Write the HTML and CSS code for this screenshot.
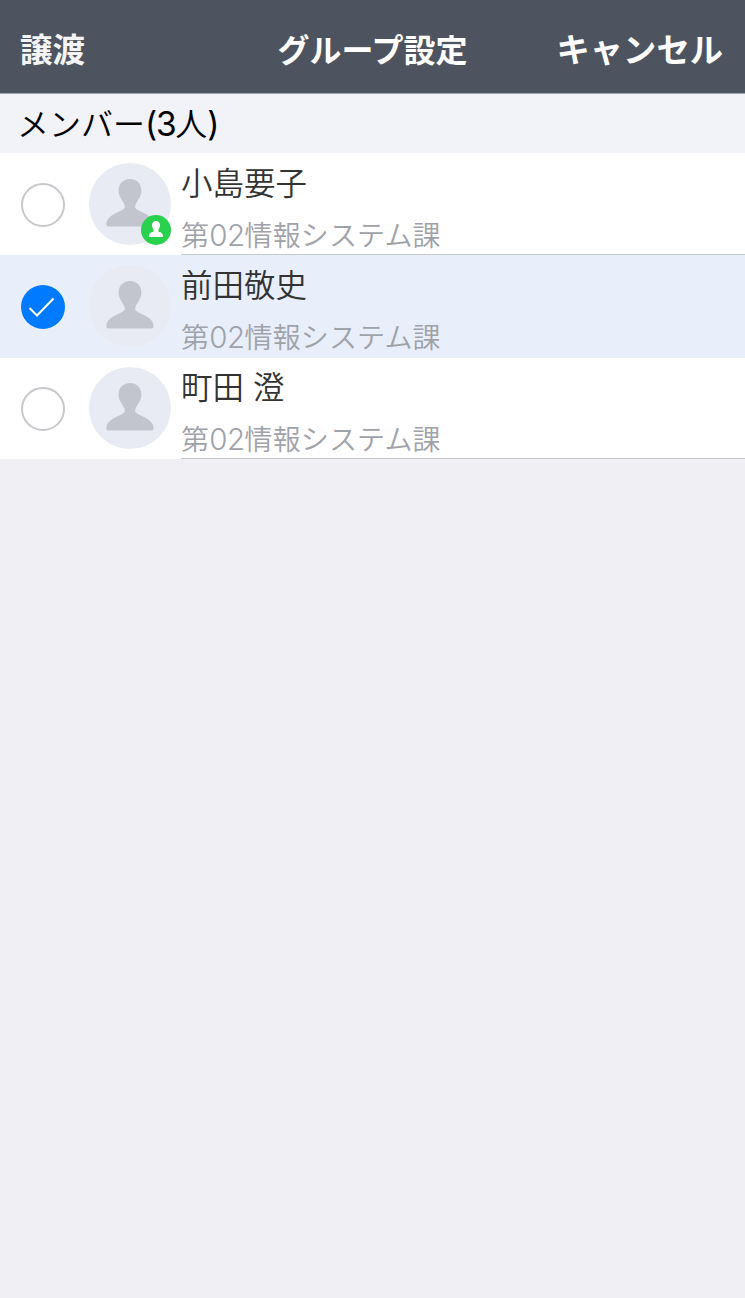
FILE: index.html
```
<!DOCTYPE html>
<html lang="ja">

<head>
  <meta charset="UTF-8" />
  <meta name="viewport" content="width=device-width, initial-scale=1.0" />
  <title>グループ設定</title>
  <link rel="stylesheet" href="styles.css">
</head>

<body>
  <!-- Shared icon shapes -->
  <svg class="symbols" aria-hidden="true">
    <symbol id="person" viewBox="0 0 48 48">
      <path d="M24 0C17 0 12.600 5 12.600 11.800C12.600 17.500 16 20.500 18.300 25.200C19.600 28 18.800 29.500 15.800 31.200C9.500 34.700 0.300 37 0.300 45.500Q0.300 47.600 2.600 47.600H45.400Q47.700 47.600 47.700 45.500C47.700 37 38.500 34.700 32.200 31.200C29.200 29.500 28.400 28 29.700 25.200C32 20.500 35.400 17.500 35.400 11.800C35.400 5 31 0 24 0z" />
    </symbol>
  </svg>

  <header class="navbar">
    <button class="nav-button">譲渡</button>
    <h1>グループ設定</h1>
    <button class="nav-button cancel">キャンセル</button>
  </header>

  <h2 class="section-title">メンバー<span class="latin">(3</span>人<span class="latin">)</span></h2>

  <ul class="member-list">
    <li class="member">
      <span class="radio"></span>
      <div class="avatar">
        <svg class="avatar-icon"><use href="#person" /></svg>
        <span class="badge">
          <svg class="badge-icon" viewBox="0 0 14 16">
            <path d="M7 0C4.500 0 3 1.700 3 4.200C3 6.200 3.700 7.400 4.600 8.400V10.200C3.500 11.300 0 11.600 0 14.800Q0 16 1 16H13Q14 16 14 14.800C14 11.600 10.500 11.300 9.400 10.200V8.400C10.300 7.400 11 6.200 11 4.200C11 1.700 9.500 0 7 0z" />
          </svg>
        </span>
      </div>
      <div class="member-info">
        <p class="name">小島要子</p>
        <p class="dept">第<span class="latin">02</span>情報システム課</p>
      </div>
    </li>
    <li class="member selected">
      <span class="radio">
        <svg class="check" viewBox="0 0 44 44"><path d="M8.500 23L16 30.500L32.500 13.500" /></svg>
      </span>
      <div class="avatar">
        <svg class="avatar-icon"><use href="#person" /></svg>
      </div>
      <div class="member-info">
        <p class="name">前田敬史</p>
        <p class="dept">第<span class="latin">02</span>情報システム課</p>
      </div>
    </li>
    <li class="member">
      <span class="radio"></span>
      <div class="avatar">
        <svg class="avatar-icon"><use href="#person" /></svg>
      </div>
      <div class="member-info">
        <p class="name">町田 澄</p>
        <p class="dept">第<span class="latin">02</span>情報システム課</p>
      </div>
    </li>
  </ul>
</body>

</html>
```
FILE: styles.css
```
* {
  box-sizing: border-box;
}

body {
  margin: 0;
  min-height: 100vh;
  background-color: #efeff4;
  color: #333333;
  font-family: "Noto Sans CJK JP", sans-serif;
}

h1,
h2,
p,
ul {
  margin: 0;
  padding: 0;
}

.symbols {
  display: none;
}

.latin {
  font-family: Inter, sans-serif;
  line-height: 1;
}

/* Navigation bar */
.navbar {
  display: grid;
  grid-template-columns: 1fr auto 1fr;
  align-items: center;
  height: 94px;
  padding: 2px 22px 0 20px;
  background-color: #4e545f;
  border-bottom: 1px solid #a1a5ad;
  color: #ffffff;
}

.navbar h1 {
  padding-left: 2px;
  font-size: 32px;
  font-weight: 700;
  line-height: 48px;
}

.nav-button {
  justify-self: start;
  padding: 0;
  border: none;
  background: none;
  color: #f4f4f6;
  font: inherit;
  font-size: 32.5px;
  font-weight: 700;
  line-height: 48px;
  cursor: pointer;
}

.nav-button.cancel {
  justify-self: end;
  color: #ffffff;
  font-size: 33.3px;
}

/* Section heading */
.section-title {
  height: 59px;
  padding-left: 17px;
  background-color: #f2f3f8;
  color: #000000;
  font-size: 32px;
  font-weight: 350;
  line-height: 57px;
}

.section-title .latin {
  font-size: 33.5px;
  font-weight: 400;
  letter-spacing: -1.3px;
}

/* Member list */
.member-list {
  list-style: none;
}

.member {
  display: flex;
  height: 102px;
  padding-left: 21px;
  background-color: #ffffff;
}

.radio {
  flex: none;
  width: 44px;
  height: 44px;
  margin: 30px 24px 0 0;
  border: 2px solid #c7c7cc;
  border-radius: 50%;
}

.avatar {
  position: relative;
  flex: none;
  width: 82px;
  height: 82px;
  margin: 10px 10px 0 0;
  border-radius: 50%;
  background-color: #e8ebf3;
}

.avatar-icon {
  display: block;
  width: 48px;
  height: 48px;
  margin: 16px auto 0;
  fill: #c2c5cd;
}

.badge {
  position: absolute;
  right: 0;
  bottom: 0;
  width: 30px;
  height: 30px;
  border-radius: 50%;
  background-color: #2ad14e;
}

.badge-icon {
  display: block;
  width: 14px;
  height: 16px;
  margin: 6px auto 0;
  fill: #ffffff;
}

.member-info {
  flex: 1;
  border-bottom: 1px solid #c8c7cc;
}

.name {
  height: 60px;
  font-size: 31.5px;
  font-weight: 350;
  line-height: 57px;
  word-spacing: 2px;
}

.dept {
  color: #9fa2a9;
  font-size: 28px;
  font-weight: 350;
  letter-spacing: 0.15px;
  line-height: 43px;
}

.dept .latin {
  font-size: 29.5px;
  font-weight: 350;
  letter-spacing: -0.5px;
}

.selected {
  position: relative;
  background-color: #e8effa;
  box-shadow: 0 1px #e8effa;
}

.selected .radio {
  border: none;
  background-color: #007aff;
}

.selected .member-info {
  border-bottom: none;
}

.check {
  display: block;
  fill: none;
  stroke: #ffffff;
  stroke-width: 2;
}
```
